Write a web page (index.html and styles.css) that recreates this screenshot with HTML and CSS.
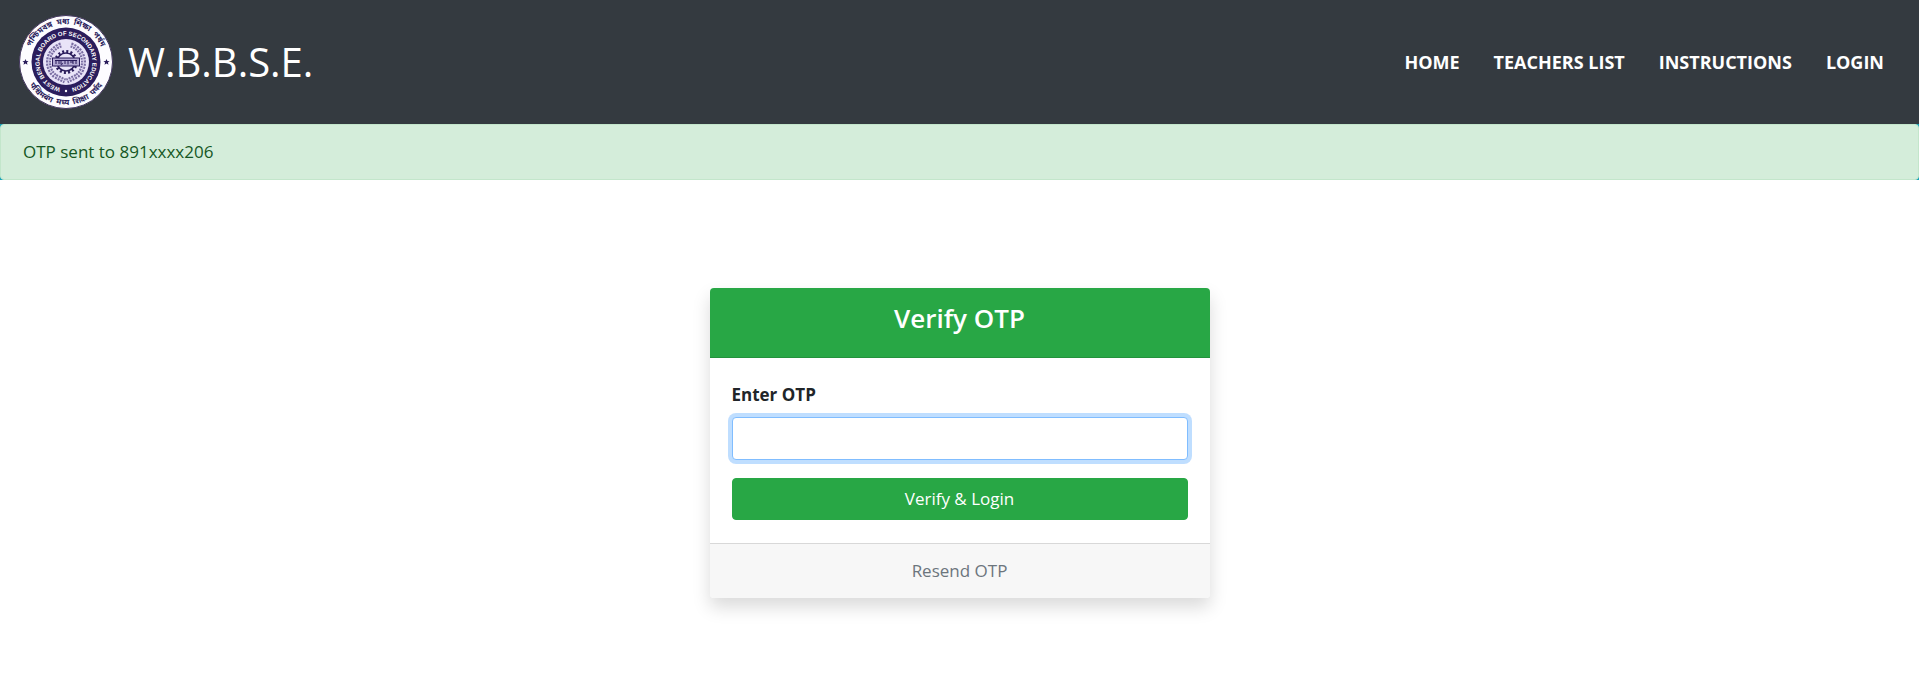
FILE: index.html
```html
<!DOCTYPE html>
<html lang="en">
<head>
    <meta charset="UTF-8">
    <title>W.B.B.S.E. - Verify OTP</title>
    <meta name="viewport" content="width=device-width, initial-scale=1">
    <link rel="stylesheet" href="styles.css">
</head>
<body>
    <header class="navbar">
        <a class="brand" href="#">
            <svg class="brand-logo" viewBox="0 0 96 96" aria-hidden="true">
                <defs>
                    <path id="outer-top" d="M10 48a38 38 0 0 1 76 0"/>
                    <path id="outer-bottom" d="M5 48a43 43 0 0 0 86 0"/>
                    <path id="inner-ring" d="M47 74.500a26.500 26.500 0 1 1 2 0"/>
                </defs>
                <circle cx="48" cy="48" r="46.500" fill="#fdfcff" stroke="#43365f"/>
                <circle cx="48" cy="48" r="34.500" fill="#2b1d5c"/>
                <text class="seal-script"><textPath href="#outer-top" startOffset="50%">পশ্চিমবঙ্গ &#160;মধ্য &#160;শিক্ষা &#160;পর্ষদ</textPath></text>
                <text class="seal-script"><textPath href="#outer-bottom" startOffset="50%">पश्चिमबंग &#160;मध्य &#160;शिक्षा &#160;पर्षद</textPath></text>
                <text class="seal-name"><textPath href="#inner-ring" startOffset="50%">WEST BENGAL BOARD OF SECONDARY EDUCATION</textPath></text>
                <circle cx="48" cy="77" r="1.200" fill="#fff"/>
                <!-- side stars -->
                <path d="M7.500 45l.9 2 2.200.2-1.700 1.400.6 2.200-2-1.200-2 1.200.6-2.200-1.700-1.400 2.200-.2zM88.500 45l.9 2 2.200.2-1.700 1.400.6 2.200-2-1.200-2 1.200.6-2.200-1.700-1.400 2.200-.2z" fill="#2b1d5c"/>
                <circle cx="48" cy="48" r="23" fill="#e9e4f8"/>
                <!-- wheat wreath -->
                <path d="M43 31a18 18 0 0 0-6 31l10 5M53 31a18 18 0 0 1 6 31l-10 5" fill="none" stroke="#7a6ea3" stroke-width="5" stroke-dasharray="2 1"/>
                <path d="M43 31a18 18 0 0 0-6 31l10 5M53 31a18 18 0 0 1 6 31l-10 5" fill="none" stroke="#d3cbe9" stroke-width="1"/>
                <!-- gear -->
                <circle cx="48" cy="48" r="10.500" fill="none" stroke="#2b1d5c" stroke-width="3" stroke-dasharray="2 2.120"/>
                <circle cx="48" cy="48" r="9" fill="#e9e4f8" stroke="#2b1d5c" stroke-width="1.500"/>
                <rect x="34.500" y="44" width="27" height="8" fill="#b3a9d3" stroke="#2b1d5c"/>
                <path d="M37 46.500h22M38 46.500v3.500M41 47v3M43 46.500v4l2-1M47 46.500v3.500M50 46.500v4M52 48h3M55 46.500v3.500M58 46.500v3.500" fill="none" stroke="#2b1d5c"/>
            </svg>
            <span class="brand-name">W.B.B.S.E.</span>
        </a>
        <nav class="nav">
            <a class="nav-link" href="#">HOME</a>
            <a class="nav-link" href="#">TEACHERS LIST</a>
            <a class="nav-link" href="#">INSTRUCTIONS</a>
            <a class="nav-link" href="#">LOGIN</a>
        </nav>
    </header>
    <div class="alert-wrap">
        <div class="alert" role="alert">OTP sent to 891xxxx206</div>
    </div>
    <main class="content">
        <form class="card">
            <div class="card-header">
                <h4 class="card-title">Verify OTP</h4>
            </div>
            <div class="card-body">
                <label class="form-label" for="otp">Enter OTP</label>
                <input class="form-control" type="text" id="otp" name="otp">
                <button class="btn" type="submit">Verify &amp; Login</button>
            </div>
            <div class="card-footer">
                <a class="resend" href="#">Resend OTP</a>
            </div>
        </form>
    </main>
</body>
</html>
```
FILE: styles.css
```css
*{box-sizing: border-box;}
body{
    margin: 0;
    min-height: 100vh;
    font-family: "Segoe UI", "Open Sans", "Noto Sans", sans-serif;
    font-size: 17px;
    line-height: 27px;
    color: #212529;
    background: #fff;
}
a{text-decoration: none;}
.navbar{
    display: flex;
    align-items: center;
    justify-content: space-between;
    padding: 14px 18px;
    background: #343a40;
}
.brand{
    display: flex;
    align-items: center;
    gap: 14px;
    color: #fff;
}
.brand-logo{
    display: block;
    width: 96px;
    height: 96px;
}
.brand-name{
    font-size: 40px;
    line-height: 60px;
}
.seal-script{
    font-family: "Noto Sans Bengali", "Noto Sans Devanagari", "Noto Sans", sans-serif;
    font-size: 8px;
    font-weight: 700;
    fill: #2b1d5c;
    text-anchor: middle;
}
.seal-name{
    font-family: "Liberation Sans", sans-serif;
    font-size: 6px;
    font-weight: 700;
    fill: #fff;
    text-anchor: middle;
}
.nav{
    display: flex;
    gap: 34px;
    padding-right: 17px;
}
.nav-link{
    font-size: 18px;
    font-weight: 700;
    color: #fff;
}
.alert-wrap{
    background: #17a2b8;
}
.alert{
    padding: 14px 22px;
    line-height: 26px;
    color: #155724;
    background: #d4edda;
    border: 1px solid #c3e6cb;
    border-radius: 4px;
}
.content{
    display: flex;
    justify-content: center;
    padding: 108px 18px 48px;
}
.card{
    width: 100%;
    max-width: 500px;
    border-radius: 4px;
    background: #fff;
    box-shadow: 0 9px 18px rgba(0,0,0,0.15);
}
.card-header{
    padding: 14px 22px 13px;
    text-align: center;
    color: #fff;
    background: #28a745;
    border-bottom: 1px solid rgba(0,0,0,0.125);
    border-radius: 4px 4px 0 0;
}
.card-title{
    margin: 0 0 9px;
    font-size: 26px;
    line-height: 33px;
    font-weight: 600;
}
.card-body{
    display: flex;
    flex-direction: column;
    padding: 23px 22px;
}
.form-label{
    margin-bottom: 9px;
    font-weight: 700;
}
.form-control{
    height: 43px;
    padding: 6px 14px;
    font: inherit;
    color: #495057;
    background: #fff;
    border: 1px solid #80bdff;
    border-radius: 4px;
    outline: 0;
    box-shadow: 0 0 0 4px rgba(0,123,255,0.25);
}
.btn{
    height: 42px;
    margin-top: 18px;
    padding: 6px 14px;
    font: inherit;
    line-height: 26px;
    color: #fff;
    background: #28a745;
    border: 1px solid #28a745;
    border-radius: 4px;
    cursor: pointer;
}
.card-footer{
    padding: 13px 22px 14px;
    text-align: center;
    background: #f7f7f7;
    border-top: 1px solid #d8d8d8;
    border-radius: 0 0 4px 4px;
}
.resend{
    color: #6c757d;
}
```
